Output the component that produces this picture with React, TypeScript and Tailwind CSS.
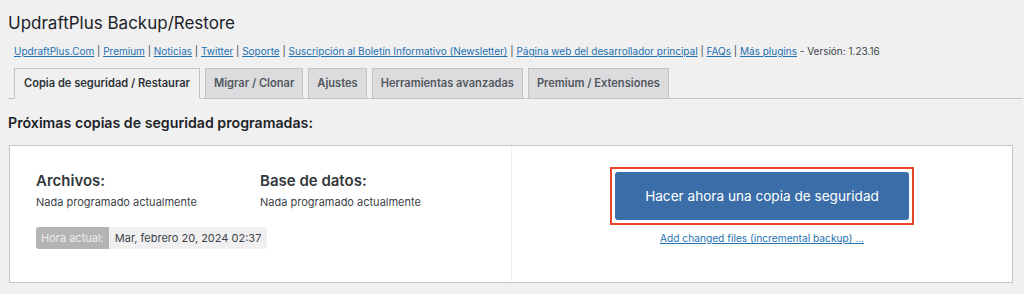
import React from 'react';

const links = [
  'UpdraftPlus.Com',
  'Premium',
  'Noticias',
  'Twitter',
  'Soporte',
  'Suscripción al Boletín Informativo (Newsletter)',
  'Página web del desarrollador principal',
  'FAQs',
  'Más plugins',
];

const tabs = [
  { label: 'Copia de seguridad / Restaurar', active: true },
  { label: 'Migrar / Clonar' },
  { label: 'Ajustes' },
  { label: 'Herramientas avanzadas' },
  { label: 'Premium / Extensiones' },
];

export default function App() {
  return (
    <div
      className="w-[1024px] h-[294px] overflow-hidden bg-[#f0f0f1] text-[#1d2327] px-2"
      style={{ fontFamily: 'Inter, "Noto Sans", sans-serif' }}
    >
      {/* Page title */}
      <h1 className="pt-[9px] text-[17px] leading-[28px] font-normal">
        UpdraftPlus Backup/Restore
      </h1>

      {/* Plugin links */}
      <div className="mt-[7px] pl-[6px] text-[10px] leading-[14px] text-[#3c434a]">
        {links.map((l, i) => (
          <React.Fragment key={l}>
            <a href="#" className="text-[#2271b1] underline">
              {l}
            </a>
            {i < links.length - 1 ? ' | ' : ''}
          </React.Fragment>
        ))}
        {' - Versión: 1.23.16'}
      </div>

      {/* Tabs */}
      <div className="mt-[10px] flex items-end gap-[5px] pl-[6px] border-b border-[#c3c4c7] w-[1015px]">
        {tabs.map((t) => (
          <div
            key={t.label}
            className={
              t.active
                ? 'h-[31px] -mb-px px-[9px] flex items-center border border-[#c3c4c7] border-b-[#f0f0f1] bg-[#f0f0f1] text-[11.1px] font-semibold text-[#2c3338]'
                : 'h-[30px] px-[8px] flex items-center border border-[#c3c4c7] border-b-0 bg-[#dcdcde] text-[11.1px] font-semibold text-[#50575e]'
            }
          >
            {t.label}
          </div>
        ))}
      </div>

      {/* Section heading */}
      <h2 className="mt-[15px] text-[14.2px] leading-[18px] font-semibold text-[#1d2327]">
        Próximas copias de seguridad programadas:
      </h2>

      {/* Card */}
      <div className="mt-[13px] ml-px w-[1004px] h-[138px] flex bg-white border border-[#c3c4c7]">
        <div className="w-[502px] border-r border-[#f0f0f1] pl-[26px] pt-[25px]">
          <div className="flex">
            <div className="w-[224px]">
              <div className="text-[15px] leading-[20px] font-semibold text-[#32373c]">Archivos:</div>
              <div className="mt-[4px] text-[11px] leading-[14px] text-[#3c434a]">
                Nada programado actualmente
              </div>
            </div>
            <div>
              <div className="text-[15px] leading-[20px] font-semibold text-[#32373c]">Base de datos:</div>
              <div className="mt-[4px] text-[11px] leading-[14px] text-[#3c434a]">
                Nada programado actualmente
              </div>
            </div>
          </div>
          <div className="mt-[18px] inline-flex h-[22px] text-[11px] rounded-[3px] overflow-hidden">
            <span className="flex items-center px-[5px] bg-[#b4b4b4] text-[#eeeeee]">Hora actual:</span>
            <span className="flex items-center px-[6px] bg-[#f0f0f1] text-[#3c434a]">
              Mar, febrero 20, 2024 02:37
            </span>
          </div>
        </div>
        <div className="flex-1 flex flex-col items-center pt-[21px]">
          <div className="border-2 border-[#e8452c] p-[3px]">
            <button className="w-[294px] h-[48px] rounded-[3px] bg-[#3b6ea8] text-white text-[13.6px]">
              Hacer ahora una copia de seguridad
            </button>
          </div>
          <a href="#" className="mt-[6px] text-[10.2px] leading-[14px] text-[#2271b1] underline">
            Add changed files (incremental backup) ...
          </a>
        </div>
      </div>
    </div>
  );
}
